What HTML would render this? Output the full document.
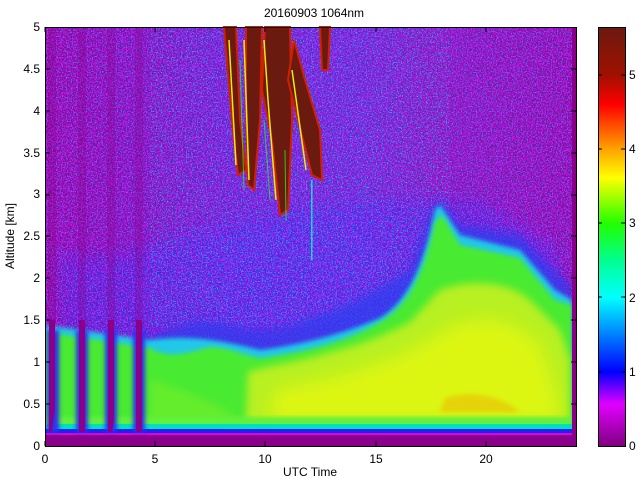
<!DOCTYPE html>
<html><head><style>
html,body{margin:0;padding:0;background:#fff;width:640px;height:480px;overflow:hidden}
svg text{font-family:"Liberation Sans",sans-serif;font-size:12px;fill:#000}
</style></head><body>
<svg width="640" height="480" viewBox="0 0 640 480" xmlns="http://www.w3.org/2000/svg">
<defs>
<linearGradient id="cb" x1="0" y1="0" x2="0" y2="1">
<stop offset="0" stop-color="#6b1a10"/>
<stop offset=".115" stop-color="#a01000"/>
<stop offset=".185" stop-color="#ff0000"/>
<stop offset=".29" stop-color="#ffa000"/>
<stop offset=".36" stop-color="#ffff00"/>
<stop offset=".47" stop-color="#20ff00"/>
<stop offset=".557" stop-color="#00ff90"/>
<stop offset=".646" stop-color="#00ffff"/>
<stop offset=".734" stop-color="#0080ff"/>
<stop offset=".823" stop-color="#0000ff"/>
<stop offset=".9" stop-color="#e000ff"/>
<stop offset="1" stop-color="#800080"/>
</linearGradient>
<linearGradient id="up" x1="0" y1="0" x2="1" y2="0">
<stop offset="0" stop-color="#8a0a98"/>
<stop offset=".2" stop-color="#7418b0"/>
<stop offset=".38" stop-color="#6224c8"/>
<stop offset=".6" stop-color="#6428c8"/>
<stop offset=".75" stop-color="#7a1cb0"/>
<stop offset="1" stop-color="#84109e"/>
</linearGradient>
<filter id="nm" x="0" y="0" width="100%" height="100%">
<feTurbulence type="fractalNoise" baseFrequency="0.8" numOctaves="1" seed="3"/>
<feColorMatrix values="0 0 0 0 0.85  0 0 0 0 0  0 0 0 0 1  9 0 0 0 -4.7"/>
</filter>
<filter id="nb" x="0" y="0" width="100%" height="100%">
<feTurbulence type="fractalNoise" baseFrequency="0.8" numOctaves="1" seed="11"/>
<feColorMatrix values="0 0 0 0 0.1  0 0 0 0 0.15  0 0 0 0 1  0 9 0 0 -4.9"/>
</filter>
<filter id="nc" x="0" y="0" width="100%" height="100%">
<feTurbulence type="fractalNoise" baseFrequency="0.8" numOctaves="1" seed="23"/>
<feColorMatrix values="0 0 0 0 0  0 0 0 0 0.9  0 0 0 0 1  0 0 12 0 -7.6"/>
</filter>
<filter id="b8" x="-20%" y="-20%" width="140%" height="140%"><feGaussianBlur stdDeviation="8"/></filter>
<filter id="b4" x="-20%" y="-20%" width="140%" height="140%"><feGaussianBlur stdDeviation="4"/></filter>
<filter id="b2" x="-20%" y="-20%" width="140%" height="140%"><feGaussianBlur stdDeviation="2"/></filter>
<clipPath id="pc"><rect x="45" y="27" width="527" height="419"/></clipPath>
</defs>
<text x="314" y="17" text-anchor="middle">20160903 1064nm</text>
<rect x="45" y="27" width="531" height="419" fill="#8b008b"/>
<rect x="45" y="27" width="527" height="419" fill="url(#up)"/>
<g clip-path="url(#pc)">
<path d="M60,250 C120,270 150,240 200,230 C260,215 330,200 420,200 L480,200 L560,250 L560,330 L60,340Z" fill="#3030e8" opacity=".55" filter="url(#b8)"/>
<rect x="45" y="27" width="527" height="419" filter="url(#nm)"/>
<rect x="45" y="27" width="527" height="419" filter="url(#nb)"/>
<rect x="150" y="27" width="300" height="300" filter="url(#nc)" opacity=".8"/>
<g fill="#8b008b" opacity=".3">
<rect x="48" y="27" width="8" height="300"/><rect x="78" y="27" width="8" height="300"/>
<rect x="107" y="27" width="8" height="300"/><rect x="135" y="27" width="8" height="300"/>
</g>
<path d="M140,340 C170,330 190,320 210,322 C240,325 260,335 290,325 C340,310 380,290 410,270 L430,215 L440,200 L460,225 L520,235 L555,270 L572,285 L572,446 L140,446Z" fill="#2a3cf0" opacity=".7" filter="url(#b4)"/>
<path d="M45,325 L150,340 C190,335 220,340 260,350 C300,345 340,335 380,318 C410,300 425,260 435,210 L440,205 L460,235 L520,250 L555,290 L572,300 L572,446 L45,446Z" fill="#20c8e8" filter="url(#b2)"/>
<path d="M45,332 L150,348 C170,360 190,352 210,347 C230,347 250,358 262,358 C300,352 340,345 380,322 C410,305 425,270 435,222 L442,215 L460,245 L520,258 L555,300 L572,305 L572,430 L45,430Z" fill="#48ea30" filter="url(#b2)"/>
<path d="M150,380 C200,395 230,410 245,425 L150,425Z" fill="#80f028" opacity=".5" filter="url(#b4)"/>
<!-- yellow-green region -->
<path d="M246,425 L248,372 C270,365 300,362 330,352 C360,345 385,335 410,322 L440,290 C470,280 505,280 530,300 L560,330 L570,360 L570,425Z" fill="#b8f020" filter="url(#b4)"/>
<path d="M270,420 L275,390 C320,380 380,370 430,340 C470,310 510,315 540,345 L555,390 L560,420Z" fill="#e8f808" opacity=".75" filter="url(#b8)"/>
<path d="M440,412 L445,398 C470,390 500,395 520,412Z" fill="#f0b000" opacity=".5" filter="url(#b2)"/>
<rect x="45" y="417" width="527" height="9" fill="#60f040" filter="url(#b2)"/>
<rect x="45" y="424" width="527" height="5" fill="#00e0c0"/>
<rect x="45" y="429" width="527" height="4" fill="#2020f0"/>
<rect x="45" y="433" width="527" height="2" fill="#e000e0"/>
<g fill="#2a30f0" filter="url(#b2)">
<rect x="47" y="330" width="12" height="102"/><rect x="76" y="330" width="12" height="102"/>
<rect x="105" y="330" width="12" height="102"/><rect x="133" y="330" width="12" height="102"/>
</g>
<g fill="#8b008b">
<path d="M49,432 L49,320 L55,320 L55,410Q53,420 52,432Z"/>
<path d="M79,432 L79,320 L85,320 L85,432Z"/>
<path d="M108,432 L108,320 L114,320 L114,420 L112,432Z"/>
<path d="M136,432 L136,320 L142,320 L142,432Z"/>
</g>
</g>
<rect x="45" y="435" width="531" height="11" fill="#8b008b"/>
<rect x="572" y="27" width="4" height="419" fill="#8b008b"/>
<g stroke="#d02000" stroke-width="2" fill="#6b1a10">
<path d="M224,27 L236,27 L240,120 L246,170 L238,175 L232,120Z"/>
<path d="M246,27 L262,27 L260,120 L254,190 L248,185 L246,100Z"/>
<path d="M265,27 L290,27 L292,120 L288,210 L280,215 L272,140 L262,90Z"/>
<path d="M294,40 L305,80 L320,130 L322,180 L312,175 L298,120 L288,80Z"/>
<path d="M320,27 L330,27 L328,70 L322,70Z"/>
</g>
<g stroke="#e8f000" stroke-width="1.5" fill="none">
<path d="M229,40 L236,165"/><path d="M244,40 L249,180"/><path d="M264,40 L268,100 L276,200"/><path d="M292,70 L306,170"/>
</g>
<g stroke="#20f020" stroke-width="1" fill="none" opacity=".8">
<path d="M240,60 L244,190"/><path d="M264,120 L270,200"/><path d="M285,150 L286,220"/>
</g>
<rect x="311" y="180" width="1.5" height="80" fill="#20d0e0"/>
<rect x="45.5" y="27.5" width="531" height="419" fill="none" stroke="#000"/>
<g stroke="#000">
<path d="M45,446v-5M155,446v-5M265,446v-5M376,446v-5M486,446v-5"/>
<path d="M45,27v5M155,27v5M265,27v5M376,27v5M486,27v5"/>
<path d="M45,404h5M45,362h5M45,320h5M45,278h5M45,236h5M45,195h5M45,153h5M45,111h5M45,69h5"/>
<path d="M576,404h-5M576,362h-5M576,320h-5M576,278h-5M576,236h-5M576,195h-5M576,153h-5M576,111h-5M576,69h-5"/>
</g>
<g text-anchor="end">
<text x="40" y="450">0</text><text x="40" y="408">0.5</text><text x="40" y="366">1</text><text x="40" y="324">1.5</text>
<text x="40" y="282">2</text><text x="40" y="240">2.5</text><text x="40" y="198">3</text><text x="40" y="157">3.5</text>
<text x="40" y="115">4</text><text x="40" y="73">4.5</text><text x="40" y="31">5</text>
</g>
<g text-anchor="middle">
<text x="45" y="463">0</text><text x="155" y="463">5</text><text x="265" y="463">10</text><text x="376" y="463">15</text><text x="486" y="463">20</text>
<text x="310" y="476">UTC Time</text>
</g>
<text transform="translate(14,236) rotate(-90)" text-anchor="middle">Altitude [km]</text>
<rect x="598" y="27" width="27" height="419" fill="url(#cb)"/>
<rect x="598.5" y="27.5" width="27" height="419" fill="none" stroke="#000"/>
<g stroke="#000"><path d="M598,372h4M598,297h4M598,223h4M598,149h4M598,75h4M625,372h-4M625,297h-4M625,223h-4M625,149h-4M625,75h-4"/></g>
<g>
<text x="629" y="450">0</text><text x="629" y="376">1</text><text x="629" y="302">2</text><text x="629" y="227">3</text><text x="629" y="153">4</text><text x="629" y="79">5</text>
</g>
</svg>
</body></html>
